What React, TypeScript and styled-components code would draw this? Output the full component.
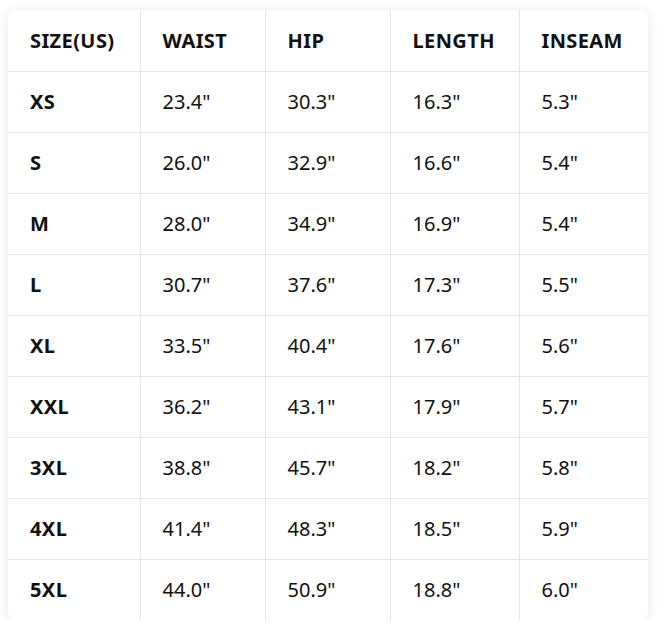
import React from "react";
import styled, { createGlobalStyle } from "styled-components";

const rows: [string, string, string, string, string][] = [
  ["XS", '23.4"', '30.3"', '16.3"', '5.3"'],
  ["S", '26.0"', '32.9"', '16.6"', '5.4"'],
  ["M", '28.0"', '34.9"', '16.9"', '5.4"'],
  ["L", '30.7"', '37.6"', '17.3"', '5.5"'],
  ["XL", '33.5"', '40.4"', '17.6"', '5.6"'],
  ["XXL", '36.2"', '43.1"', '17.9"', '5.7"'],
  ["3XL", '38.8"', '45.7"', '18.2"', '5.8"'],
  ["4XL", '41.4"', '48.3"', '18.5"', '5.9"'],
  ["5XL", '44.0"', '50.9"', '18.8"', '6.0"'],
];

const headers = ["SIZE(US)", "WAIST", "HIP", "LENGTH", "INSEAM"];
const widths = [132, 125, 125, 129, 129];

const App: React.FC = () => {
  return (
    <>
      <GlobalStyle />
      <Page>
        <Card>
          <Table>
            <colgroup>
              {widths.map((w, i) => (
                <col key={i} style={{ width: w }} />
              ))}
            </colgroup>
            <thead>
              <tr>
                {headers.map((h) => (
                  <HeadCell key={h}>{h}</HeadCell>
                ))}
              </tr>
            </thead>
            <tbody>
              {rows.map((r) => (
                <tr key={r[0]}>
                  {r.map((v, i) => (
                    <Cell key={i} $bold={i === 0}>
                      {v}
                    </Cell>
                  ))}
                </tr>
              ))}
            </tbody>
          </Table>
        </Card>
      </Page>
    </>
  );
};

const GlobalStyle = createGlobalStyle`
  body {
    margin: 0;
    background: #ffffff;
    font-family: "Noto Sans", "Open Sans", sans-serif;
  }
`;

const Page = styled.div`
  padding: 10px 13px 0 8px;
`;

const Card = styled.div`
  width: 640px;
  background: #ffffff;
  border-radius: 8px;
  overflow: hidden;
  box-shadow: 0 2px 14px rgba(0, 0, 0, 0.1);
`;

const Table = styled.table`
  width: 640px;
  border-collapse: collapse;
  table-layout: fixed;

  tr:last-child td {
    border-bottom: none;
  }
  th:first-child,
  td:first-child {
    border-left: none;
  }
  th:last-child,
  td:last-child {
    border-right: none;
  }
`;

const HeadCell = styled.th`
  height: 61px;
  padding: 0 0 0 22px;
  text-align: left;
  font-size: 20px;
  font-weight: 700;
  letter-spacing: 0.4px;
  color: #111111;
  border: 1px solid #e6e6e6;
  border-top: none;
  box-sizing: border-box;
  white-space: nowrap;
`;

const Cell = styled.td<{ $bold?: boolean }>`
  height: 61px;
  padding: 0 0 0 22px;
  font-size: 20px;
  font-weight: ${({ $bold }) => ($bold ? 700 : 400)};
  letter-spacing: ${({ $bold }) => ($bold ? "0.4px" : "0")};
  color: #111111;
  border: 1px solid #e6e6e6;
  box-sizing: border-box;
`;

export default App;
